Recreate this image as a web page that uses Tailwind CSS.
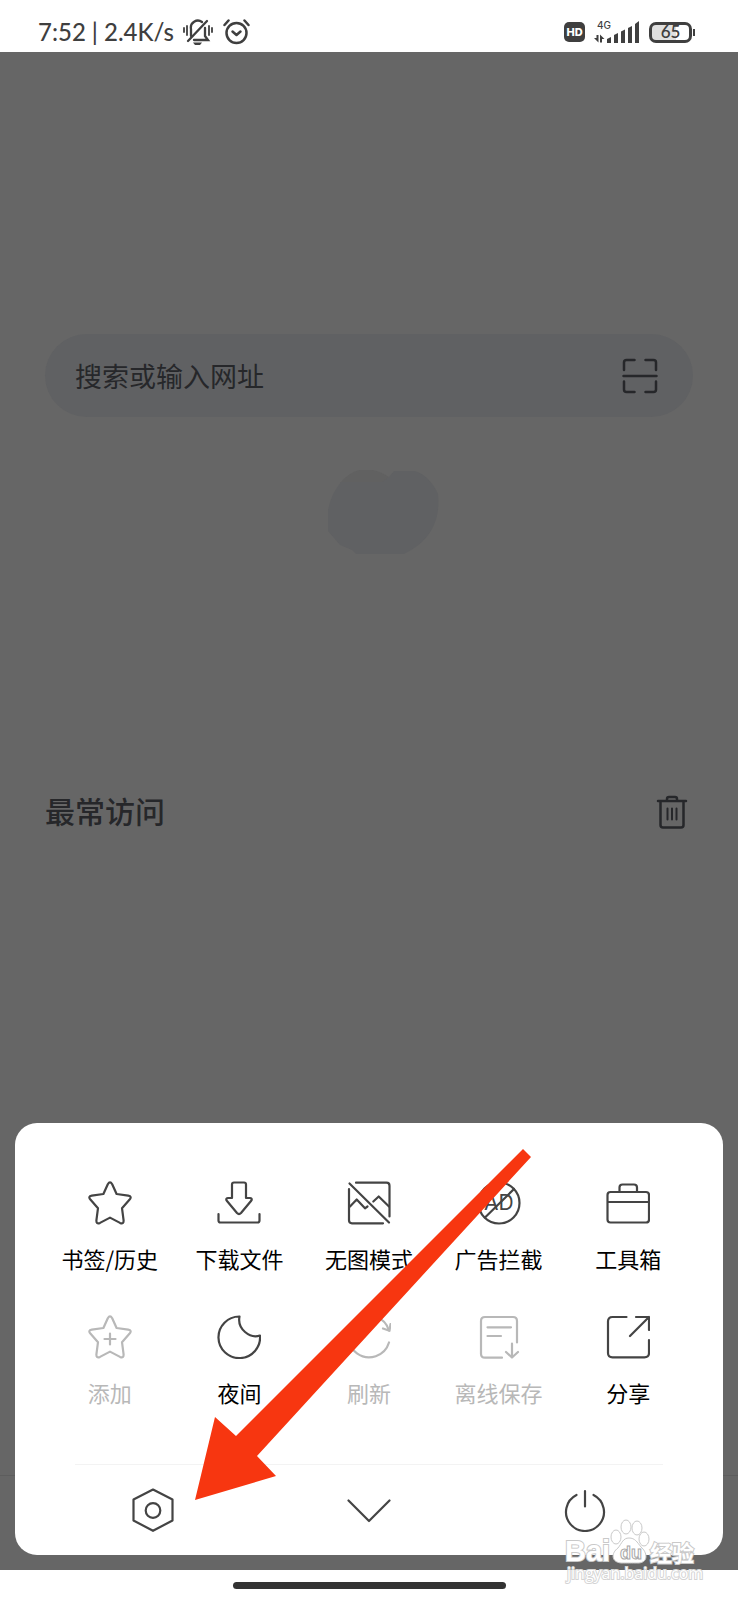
<!DOCTYPE html>
<html lang="zh-CN">
<head>
    <meta charset="UTF-8">
    <meta name="viewport" content="width=device-width, initial-scale=1.0">
    <title>浏览器菜单</title>
    <script src="https://cdn.jsdelivr.net/npm/@tailwindcss/browser@4"></script>
</head>
<body class="min-h-screen flex flex-col bg-white font-['Noto_Sans_CJK_SC',sans-serif]">
    <!-- Status bar -->
    <header class="h-[52px] shrink-0 flex items-center justify-between pl-[38px] pr-[43px] pt-3 text-[#3f3f3f]">
        <div class="flex items-center">
            <span class="font-['Lato',sans-serif] font-medium text-[24px] leading-8 whitespace-nowrap">7:52 | 2.4K/s</span>
            <svg class="w-[30px] h-[26px] ml-[9px]" viewBox="0 0 30 26" fill="none" stroke="currentColor" stroke-width="2.300" stroke-linecap="round">
                <path d="M1 9v4M4 7v9M26 7v9M29 9v4" stroke-width="1.800"/>
                <path d="M8 17V10a7 7 0 0 1 11-7M22 9v8l3 4H11"/>
                <path d="M5 22L24 2"/>
                <path d="M10 23.500h9l-2 2.500h-5z" fill="currentColor" stroke="none"/>
            </svg>
            <svg class="w-[27px] h-[26px] ml-[10px]" viewBox="0 0 27 26" fill="none" stroke="currentColor" stroke-width="2.500" stroke-linecap="round" stroke-linejoin="round">
                <circle cx="13.500" cy="14" r="10"/>
                <path d="M9.500 12.500l4 3.500 4-3.500"/>
                <path d="M1.500 6l4-4.500M25.500 6l-4-4.500"/>
            </svg>
        </div>
        <div class="flex items-center">
            <span class="w-[21px] h-5 rounded-[5px] bg-[#3f3f3f] text-white text-center font-['Inter',sans-serif] font-extrabold text-[11px] leading-5">HD</span>
            <svg class="w-[46px] h-6 ml-[9px]" viewBox="0 0 46 24" fill="currentColor">
                <text x="3" y="9" font-family="Inter, sans-serif" font-size="10" font-weight="500">4G</text>
                <path d="M2.500 15h2v7.500L0 18h2.500zM6 22.500h2V19h2.500L6 14.500z"/>
                <path d="M13 19l4-2v6h-4zM20 15l4-2v10h-4zM27 11.500l4-2V23h-4zM34 8l4-2v17h-4zM41 4l4-3v22h-4z"/>
            </svg>
            <span class="ml-[9px] w-[43px] h-[21px] border-[3px] border-[#3f3f3f] rounded-[7px] flex items-center justify-center bg-linear-to-r from-[#e0e0e0] from-65% to-white to-65% font-['Lato',sans-serif] font-semibold text-[17px] leading-5">65</span>
            <span class="ml-px w-0.5 h-[7px] bg-[#3f3f3f]"></span>
        </div>
    </header>

    <!-- Dimmed start page -->
    <main class="relative flex-1 flex flex-col bg-[#666] text-[#26272a] pt-[282px]">
        <div class="mx-[45px] h-[83px] shrink-0 rounded-full bg-[#606163] flex items-center pl-[30px] pr-[35px]">
            <input type="text" aria-label="搜索" placeholder="搜索或输入网址" class="flex-1 min-w-0 bg-transparent text-[27px] leading-10 outline-none placeholder:text-[#26272a]">
            <button type="button" aria-label="扫一扫">
                <svg class="w-9 h-9" viewBox="0 0 36 36" fill="none" stroke="currentColor" stroke-width="2.500" stroke-linecap="round">
                    <path d="M2 12V4.500Q2 2 4.500 2H12.500M23.500 2H31.500Q34 2 34 4.500V12M34 23.500V31.500Q34 34 31.500 34H23.500M12.500 34H4.500Q2 34 2 31.500V23.500M1.500 18H34.500"/>
                </svg>
            </button>
        </div>

        <div class="mt-[53px] pl-[30px] flex justify-center">
            <svg class="w-[112px] h-[85px] mr-[2px]" viewBox="0 0 112 85">
                <path d="M13 13Q33-11 62 7L57 15z" fill="#616161"/>
                <path d="M14 12H55L62 7 67 1H88Q103 6 111 24C114 52 102 72 77 84H29L25 80 13 75 1 61V40Q4 24 14 12z" fill="#606163"/>
            </svg>
        </div>

        <div class="mt-[233px] mx-[45px] flex items-center justify-between">
            <h2 class="text-[30px] leading-[44px] font-medium pb-1">最常访问</h2>
            <button type="button" aria-label="清空" class="mr-[5px]">
                <svg class="w-8 h-[34px]" viewBox="0 0 32 34" fill="none" stroke="currentColor" stroke-width="2.500" stroke-linecap="round" stroke-linejoin="round">
                    <path d="M2 6H30M11 6V4Q11 2 13 2H19Q21 2 21 4V6M4.500 6V30Q4.500 32.500 7 32.500H25Q27.500 32.500 27.500 30V6"/>
                    <path d="M11.500 13.500V24.500M16 13.500V24.500M20.500 13.500V24.500" stroke-width="2"/>
                </svg>
            </button>
        </div>

        <div class="mt-auto h-[95px] border-t border-[#5d5d5d]"></div>

        <!-- Menu sheet -->
        <section class="absolute inset-x-[15px] bottom-[15px] rounded-[22px] bg-white px-[30px] pt-[58px] pb-[23px] text-[#444]">
            <div class="grid grid-cols-5 gap-y-[41px] text-[22px] leading-8 whitespace-nowrap">
                <button type="button" class="flex flex-col items-center gap-[17px]">
                    <svg class="w-11 h-11" viewBox="0 0 44 44" fill="none" stroke="currentColor" stroke-width="2.200" stroke-linejoin="round">
                        <path d="M19.800 3.200Q22-.6 24.200 3.200L28.600 13 40.200 14.600Q44.400 15.400 41.400 18.800L34 27.200 35.600 39.400Q35.800 43.600 32 41.900L22 36.600 12 41.900Q8.200 43.600 8.400 39.400L10 27.200 2.600 18.800Q-.4 15.400 3.800 14.600L15.400 13z"/>
                    </svg>
                    <span class="text-black">书签/历史</span>
                </button>
                <button type="button" class="flex flex-col items-center gap-[17px]">
                    <svg class="w-11 h-11" viewBox="0 0 44 44" fill="none" stroke="currentColor" stroke-width="2.200" stroke-linecap="round" stroke-linejoin="round">
                        <path d="M17 1.500H27Q29 1.500 29 3.500V17H33Q36 17.500 34 20L24 32Q22 34 20 32L10 20Q8 17.500 11 17H15V3.500Q15 1.500 17 1.500z"/>
                        <path d="M1.500 33V39.500Q1.500 41.500 3.500 41.500H40.500Q42.500 41.500 42.500 39.500V33"/>
                    </svg>
                    <span class="text-black">下载文件</span>
                </button>
                <button type="button" class="flex flex-col items-center gap-[17px]">
                    <svg class="w-11 h-11" viewBox="0 0 44 44" fill="none" stroke="currentColor" stroke-width="2.200" stroke-linecap="round" stroke-linejoin="round">
                        <path d="M9 1.700H39.500Q42.500 1.700 42.500 4.700V35.500M36 42.300H5Q2 42.300 2 39.300V8"/>
                        <path d="M2.500 2.500L42 41.500"/>
                        <path d="M3 25.500L9.700 18.500 18 27.300 20.500 25.500M26.300 20.500L31.700 15.500 42 25.500"/>
                    </svg>
                    <span class="text-black">无图模式</span>
                </button>
                <button type="button" class="flex flex-col items-center gap-[17px]">
                    <svg class="w-11 h-11" viewBox="0 0 44 44" fill="none" stroke="currentColor" stroke-width="2.200" stroke-linecap="round">
                        <circle cx="22" cy="22" r="20.500"/>
                        <text x="7" y="29" font-family="Inter, sans-serif" font-size="21" fill="currentColor" stroke="none">AD</text>
                        <path d="M8 36.500L37 8"/>
                    </svg>
                    <span class="text-black">广告拦截</span>
                </button>
                <button type="button" class="flex flex-col items-center gap-[17px]">
                    <svg class="w-11 h-11" viewBox="0 0 44 44" fill="none" stroke="currentColor" stroke-width="2.200" stroke-linejoin="round">
                        <rect x="1.500" y="11" width="41.500" height="30.500" rx="3"/>
                        <path d="M2 21H43M13.500 11V6.500Q13.500 3.500 16.500 3.500H28Q31 3.500 31 6.500V11"/>
                    </svg>
                    <span class="text-black">工具箱</span>
                </button>
                <button type="button" disabled class="flex flex-col items-center gap-[17px] text-[#b8b8b8]">
                    <svg class="w-11 h-11" viewBox="0 0 44 44" fill="none" stroke="currentColor" stroke-width="2.200" stroke-linecap="round" stroke-linejoin="round">
                        <path d="M19.800 3.200Q22-.6 24.200 3.200L28.600 13 40.200 14.600Q44.400 15.400 41.400 18.800L34 27.200 35.600 39.400Q35.800 43.600 32 41.900L22 36.600 12 41.900Q8.200 43.600 8.400 39.400L10 27.200 2.600 18.800Q-.4 15.400 3.800 14.600L15.400 13z"/>
                        <path d="M16.500 24H27.500M22 18.500V29.500"/>
                    </svg>
                    <span>添加</span>
                </button>
                <button type="button" class="flex flex-col items-center gap-[17px]">
                    <svg class="w-11 h-11" viewBox="0 0 44 44" fill="none" stroke="currentColor" stroke-width="2.200" stroke-linejoin="round">
                        <path d="M22.500 1.500A20.800 20.800 0 1 0 43 20.500C33 24 20 14 22.500 1.500z"/>
                    </svg>
                    <span class="text-black">夜间</span>
                </button>
                <button type="button" disabled class="flex flex-col items-center gap-[17px] text-[#b8b8b8]">
                    <svg class="w-11 h-11" viewBox="0 0 44 44" fill="none" stroke="currentColor" stroke-width="2.200" stroke-linecap="round" stroke-linejoin="round">
                        <path d="M42 27.500A20.800 20.800 0 1 1 42 15.500"/>
                        <path d="M36 13.500L42.500 15.800 43.500 9"/>
                    </svg>
                    <span>刷新</span>
                </button>
                <button type="button" disabled class="flex flex-col items-center gap-[17px] text-[#b8b8b8]">
                    <svg class="w-11 h-11" viewBox="0 0 44 44" fill="none" stroke="currentColor" stroke-width="2.200" stroke-linecap="round" stroke-linejoin="round">
                        <path d="M25 42.700H8Q4 42.700 4 38.700V6Q4 2 8 2H36Q40 2 40 6V27.500"/>
                        <path d="M10.500 12.300H34M10.500 21H24M35 28.500V42M29 37L35 42.500 41 37"/>
                    </svg>
                    <span>离线保存</span>
                </button>
                <button type="button" class="flex flex-col items-center gap-[17px]">
                    <svg class="w-11 h-11" viewBox="0 0 44 44" fill="none" stroke="currentColor" stroke-width="2.200" stroke-linecap="round" stroke-linejoin="round">
                        <path d="M20.500 2H6.500Q2 2 2 6.500V38Q2 42.300 6.500 42.300H38.500Q43 42.300 43 38V25"/>
                        <path d="M30 2H43V15M43 2L24 21"/>
                    </svg>
                    <span class="text-black">分享</span>
                </button>
            </div>

            <hr class="mt-14 mx-[30px] border-[#f3f3f3]">

            <div class="mt-[23px] grid grid-cols-3 justify-items-center">
                <button type="button" aria-label="设置">
                    <svg class="w-11 h-11" viewBox="0 0 44 44" fill="none" stroke="currentColor" stroke-width="2.200" stroke-linejoin="round">
                        <path d="M22 1.500L41.500 11.500V32.500L22 42.800 2.500 32.500V11.500z"/>
                        <circle cx="22" cy="22.500" r="7.300"/>
                    </svg>
                </button>
                <button type="button" aria-label="收起">
                    <svg class="w-11 h-11" viewBox="0 0 44 44" fill="none" stroke="currentColor" stroke-width="2.200" stroke-linecap="round" stroke-linejoin="round">
                        <path d="M1.500 12.500L22 33 42.500 12.500"/>
                    </svg>
                </button>
                <button type="button" aria-label="退出">
                    <svg class="w-11 h-11" viewBox="0 0 44 44" fill="none" stroke="currentColor" stroke-width="2.200" stroke-linecap="round">
                        <path d="M13.500 7A19 19 0 1 0 30.500 7M22 3V18.500"/>
                    </svg>
                </button>
            </div>

            <!-- Arrow pointing at the settings button -->
            <svg class="absolute left-[180px] top-[26px] w-[337px] h-[351px] pointer-events-none" viewBox="0 0 337 351">
                <path d="M0 351L20 268 41 287 328 0 336 8 62 307 81 327z" fill="#f73610"/>
            </svg>
        </section>

        <!-- Watermark -->
        <svg class="absolute right-[32px] -bottom-4 w-[144px] h-[70px]" viewBox="0 0 144 70" fill="#fff" stroke="#c9c9c9" stroke-width="1" aria-label="Baidu 经验">
            <g stroke-width="2" style="paint-order:stroke">
                <text x="3" y="45" font-family="Liberation Sans, sans-serif" font-size="29" font-weight="700">Bai</text>
                <text x="88" y="45" font-family="Noto Sans CJK SC, sans-serif" font-size="22" font-weight="700">经验</text>
                <text x="5" y="63" font-family="Open Sans, sans-serif" font-size="16" stroke="#d4d4d4">jingyan.baidu.com</text>
            </g>
            <ellipse cx="54" cy="21" rx="5" ry="7"/>
            <ellipse cx="64" cy="11" rx="5" ry="7"/>
            <ellipse cx="75" cy="12" rx="5" ry="7"/>
            <ellipse cx="82" cy="23" rx="5" ry="7"/>
            <path d="M67 22c6 0 8 4 12 9 6 5 8 15-2 16-8 0-12 0-18 0-10-1-10-10-3-15 4-5 5-10 11-10z"/>
            <text x="58" y="43" font-family="Liberation Sans, sans-serif" font-size="18" font-weight="700" stroke="#a8a8a8">du</text>
        </svg>
    </main>

    <!-- Gesture bar -->
    <footer class="h-[30px] shrink-0 flex items-center justify-center">
        <div class="w-[273px] h-[7px] rounded-full bg-[#333]"></div>
    </footer>
</body>
</html>
